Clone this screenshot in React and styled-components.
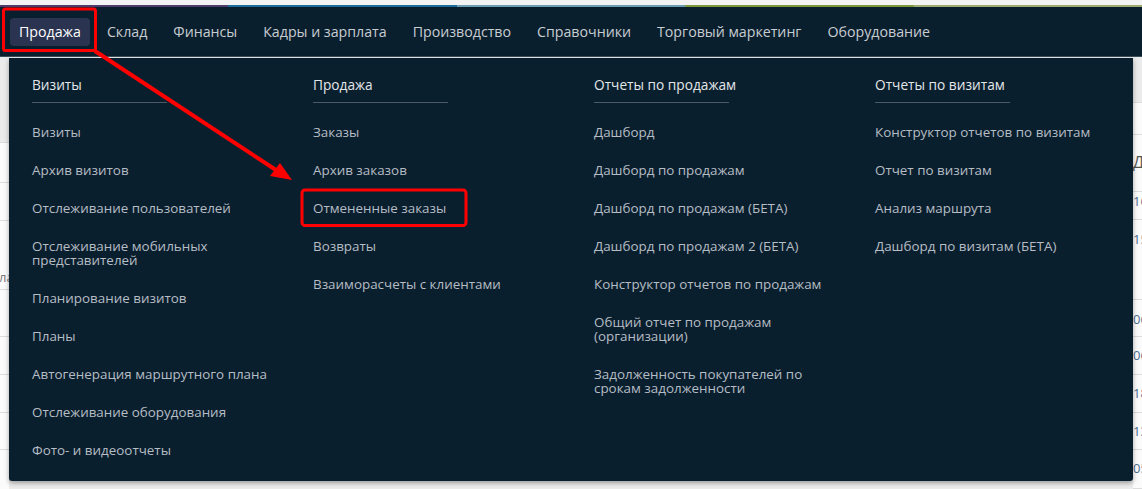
import React from 'react'
import styled, { createGlobalStyle } from 'styled-components';

const GlobalStyle = createGlobalStyle`
  html, body { margin: 0; padding: 0; }
  body {
    background: #efefef;
    font-family: "Open Sans", "Noto Sans", sans-serif;
    overflow: hidden;
  }
`;

const navItems = ['Продажа', 'Склад', 'Финансы', 'Кадры и зарплата', 'Производство', 'Справочники', 'Торговый маркетинг', 'Оборудование'];

const stripColors = ['#4c3d6c', '#1b6c9a', '#6c9db3', '#7b983f', '#9dab72'];

const columns = [
    {
        title: 'Визиты',
        items: ['Визиты', 'Архив визитов', 'Отслеживание пользователей', 'Отслеживание мобильных представителей', 'Планирование визитов', 'Планы', 'Автогенерация маршрутного плана', 'Отслеживание оборудования', 'Фото- и видеоотчеты'],
    },
    {
        title: 'Продажа',
        items: ['Заказы', 'Архив заказов', 'Отмененные заказы', 'Возвраты', 'Взаиморасчеты с клиентами'],
    },
    {
        title: 'Отчеты по продажам',
        items: ['Дашборд', 'Дашборд по продажам', 'Дашборд по продажам (БЕТА)', 'Дашборд по продажам 2 (БЕТА)', 'Конструктор отчетов по продажам', 'Общий отчет по продажам (организации)', 'Задолженность покупателей по срокам задолженности'],
    },
    {
        title: 'Отчеты по визитам',
        items: ['Конструктор отчетов по визитам', 'Отчет по визитам', 'Анализ маршрута', 'Дашборд по визитам (БЕТА)'],
    },
];

// rows of the page behind the menu (only the edges show)
const leftRows = [
    { h: 86, gray: true }, { h: 40 }, { h: 38 }, { h: 69, text: 'ла', pad: 48 }, { h: 47 }, { h: 38 }, { h: 38 }, { h: 37 }, { h: 40 },
];
const rightRows = [
    { h: 46, gray: true }, { h: 32 }, { h: 57, text: 'Д', head: true, pad: 18 }, { h: 28, text: '16', pad: 0 },
    { h: 80, text: '15', pad: 10 }, { h: 37, text: '06', pad: 10 }, { h: 38, text: '06', pad: 9 },
    { h: 38, text: '18', pad: 9 }, { h: 37, text: '13', pad: 9 }, { h: 39, text: '05', pad: 9 },
];

function App() {
    return (
        <Page>
            <GlobalStyle />
            <TopGap />
            <Strip>
                {stripColors.map(c => <StripPart key={c} $color={c} />)}
            </Strip>
            <Nav>
                {navItems.map((n, i) => (
                    <NavItem key={n} $active={i === 0}>{n}</NavItem>
                ))}
            </Nav>
            <Content>
                <EdgeTable>
                    {leftRows.map((r, i) => (
                        <Row key={i} $h={r.h} $gray={r.gray} $pad={r.pad}>
                            {r.text && <LeftText>{r.text}</LeftText>}
                        </Row>
                    ))}
                </EdgeTable>
                <Spacer />
                <EdgeTable>
                    {rightRows.map((r, i) => (
                        <Row key={i} $h={r.h} $gray={r.gray} $pad={r.pad}>
                            {r.text && <RightText $head={r.head}>{r.text}</RightText>}
                        </Row>
                    ))}
                </EdgeTable>
            </Content>

            <Dropdown>
                {columns.map(col => (
                    <Column key={col.title}>
                        <ColumnTitle>{col.title}</ColumnTitle>
                        <ItemList>
                            {col.items.map(it => <MenuItem key={it}>{it}</MenuItem>)}
                        </ItemList>
                    </Column>
                ))}
            </Dropdown>

            <Marks viewBox="0 0 1142 489" width="1142" height="489">
                <rect x="3.5" y="9" width="92" height="41.5" rx="2" fill="none" stroke="#ff0000" strokeWidth="3" />
                <line x1="95" y1="51" x2="276" y2="170" stroke="#ff0000" strokeWidth="4" />
                <polygon points="292,180 270,176 280,163" fill="#ff0000" />
                <rect x="302" y="190" width="164" height="35.5" rx="3" fill="none" stroke="#ff0000" strokeWidth="3" />
            </Marks>
        </Page>
    )
}

export default App


const Page = styled.div`
    position: relative;
    width: 1142px;
    height: 489px;
    background: #ececec;
    overflow: hidden;
`;

const TopGap = styled.div`
    height: 5px;
    background: #f3f3f3;
`;

const Strip = styled.div`
    display: flex;
    height: 2px;
`;

const StripPart = styled.div`
    flex: 1;
    background: ${p => p.$color};
`;

const Nav = styled.nav`
    display: flex;
    align-items: center;
    gap: 8px;
    height: 49px;
    padding-left: 10px;
    background: #0a1f2e;
    border-bottom: 1px solid #3c4d5a;
`;

const NavItem = styled.div`
    height: 28px;
    line-height: 28px;
    padding: 0 9px;
    border-radius: 4px;
    font-size: 14.2px;
    color: ${p => p.$active ? '#ffffff' : '#c8cdd2'};
    background: ${p => p.$active ? '#2a3350' : 'transparent'};
    white-space: nowrap;
`;

const Content = styled.div`
    display: flex;
`;

const Spacer = styled.div`
    flex: 1;
`;

const EdgeTable = styled.div`
    width: 9px;
    overflow: hidden;
    background: #fbfbfb;
`;

const Row = styled.div`
    height: ${p => p.$h}px;
    box-sizing: border-box;
    padding-top: ${p => p.$pad || 0}px;
    border-bottom: 1px solid #dcdcdc;
    background: ${p => p.$gray ? '#ebebeb' : '#fbfbfb'};
    white-space: nowrap;
`;

const LeftText = styled.div`
    font-size: 13px;
    line-height: 16px;
    color: #7a7a7a;
    margin-left: -1px;
`;

const RightText = styled.div`
    font-size: ${p => p.$head ? '16px' : '13px'};
    line-height: 18px;
    color: ${p => p.$head ? '#555' : '#4a6f95'};
`;

const Dropdown = styled.div`
    position: absolute;
    top: 58px;
    left: 9px;
    width: 1124px;
    height: 423px;
    box-sizing: border-box;
    padding: 17px 0 0 23px;
    display: grid;
    grid-template-columns: repeat(4, 281px);
    align-items: start;
    background: #0a1f2e;
    border-radius: 0 0 3px 3px;
    box-shadow: 0 2px 5px rgba(0, 0, 0, 0.35);
`;

const Column = styled.div`
    display: flex;
    flex-direction: column;
`;

const ColumnTitle = styled.div`
    width: 135px;
    padding-bottom: 7px;
    border-bottom: 1px solid #4a5a67;
    font-size: 13.7px;
    line-height: 20px;
    color: #e4e7ea;
    white-space: nowrap;
`;

const ItemList = styled.div`
    margin-top: 10px;
    display: flex;
    flex-direction: column;
`;

const MenuItem = styled.div`
    max-width: 250px;
    padding: 12px 0;
    font-size: 13.4px;
    line-height: 14px;
    color: #b6bdc4;
`;

const Marks = styled.svg`
    position: absolute;
    top: 0;
    left: 0;
    pointer-events: none;
`;
